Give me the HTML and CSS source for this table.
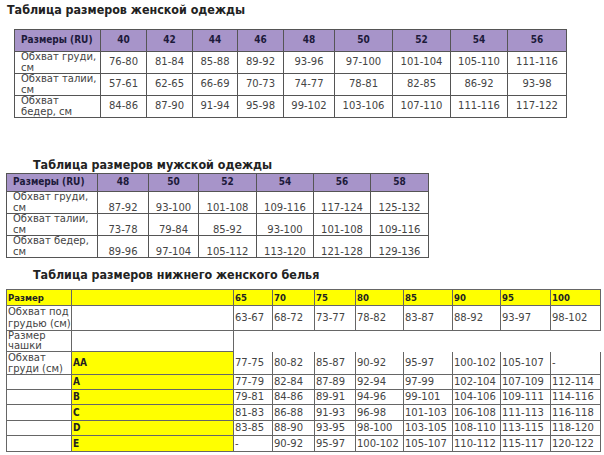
FILE: index.html
```html
<!DOCTYPE html>
<html lang="ru">
<head>
<meta charset="utf-8">
<title>Таблицы размеров</title>
<link rel="stylesheet" href="styles.css">
</head>
<body>
<h2 class="title title-1">Таблица размеров женской одежды</h2>
<table class="grid grid-w">
  <colgroup>
    <col class="w86"><col class="w46"><col class="w46"><col class="w45"><col class="w46"><col class="w51"><col class="w58"><col class="w58"><col class="w57"><col class="w59">
  </colgroup>
  <tr class="head"><th class="lab">Размеры (RU)</th><th>40</th><th>42</th><th>44</th><th>46</th><th>48</th><th>50</th><th>52</th><th>54</th><th>56</th></tr>
  <tr><td class="lab">Обхват груди,<br>см</td><td>76-80</td><td>81-84</td><td>85-88</td><td>89-92</td><td>93-96</td><td>97-100</td><td>101-104</td><td>105-110</td><td>111-116</td></tr>
  <tr><td class="lab">Обхват талии,<br>см</td><td>57-61</td><td>62-65</td><td>66-69</td><td>70-73</td><td>74-77</td><td>78-81</td><td>82-85</td><td>86-92</td><td>93-98</td></tr>
  <tr><td class="lab">Обхват<br>бедер, см</td><td>84-86</td><td>87-90</td><td>91-94</td><td>95-98</td><td>99-102</td><td>103-106</td><td>107-110</td><td>111-116</td><td>117-122</td></tr>
</table>

<h2 class="title title-2">Таблица размеров мужской одежды</h2>
<table class="grid grid-m">
  <colgroup>
    <col class="w91"><col class="w51"><col class="w50"><col class="w58"><col class="w57"><col class="w57"><col class="w58">
  </colgroup>
  <tr class="head"><th class="lab">Размеры (RU)</th><th>48</th><th>50</th><th>52</th><th>54</th><th>56</th><th>58</th></tr>
  <tr><td class="lab">Обхват груди,<br>см</td><td>87-92</td><td>93-100</td><td>101-108</td><td>109-116</td><td>117-124</td><td>125-132</td></tr>
  <tr><td class="lab">Обхват талии,<br>см</td><td>73-78</td><td>79-84</td><td>85-92</td><td>93-100</td><td>101-108</td><td>109-116</td></tr>
  <tr><td class="lab">Обхват бедер,<br>см</td><td>89-96</td><td>97-104</td><td>105-112</td><td>113-120</td><td>121-128</td><td>129-136</td></tr>
</table>

<h2 class="title title-3">Таблица размеров нижнего женского белья</h2>
<table class="bra">
  <colgroup>
    <col class="w65"><col class="w162"><col class="w39"><col class="w42"><col class="w41"><col class="w48"><col class="w49"><col class="w48"><col class="w50"><col class="w50">
  </colgroup>
  <tr class="yh r16"><th>Размер</th><th></th><th>65</th><th>70</th><th>75</th><th>80</th><th>85</th><th>90</th><th>95</th><th>100</th></tr>
  <tr class="r25"><td class="lh12">Обхват под<br>грудью (см)</td><td></td><td>63-67</td><td>68-72</td><td>73-77</td><td>78-82</td><td>83-87</td><td>88-92</td><td>93-97</td><td>98-102</td></tr>
  <tr class="r21"><td>Размер<br>чашки</td><td></td><td class="open" colspan="8"></td></tr>
  <tr class="r23"><td class="lh11">Обхват<br>груди (см)</td><td class="cup">AA</td><td class="nt">77-75</td><td class="nt">80-82</td><td class="nt">85-87</td><td class="nt">90-92</td><td class="nt">95-97</td><td class="nt">100-102</td><td class="nt">105-107</td><td class="nt">-</td></tr>
  <tr class="r15"><td></td><td class="cup">A</td><td>77-79</td><td>82-84</td><td>87-89</td><td>92-94</td><td>97-99</td><td>102-104</td><td>107-109</td><td>112-114</td></tr>
  <tr class="r15"><td></td><td class="cup">B</td><td>79-81</td><td>84-86</td><td>89-91</td><td>94-96</td><td>99-101</td><td>104-106</td><td>109-111</td><td>114-116</td></tr>
  <tr class="r16"><td></td><td class="cup">C</td><td>81-83</td><td>86-88</td><td>91-93</td><td>96-98</td><td>101-103</td><td>106-108</td><td>111-113</td><td>116-118</td></tr>
  <tr class="r15"><td></td><td class="cup">D</td><td>83-85</td><td>88-90</td><td>93-95</td><td>98-100</td><td>103-105</td><td>108-110</td><td>113-115</td><td>118-120</td></tr>
  <tr class="r16"><td></td><td class="cup">E</td><td>-</td><td>90-92</td><td>95-97</td><td>100-102</td><td>105-107</td><td>110-112</td><td>115-117</td><td>120-122</td></tr>
</table>
</body>
</html>
```

FILE: styles.css
```css
html, body {
  margin: 0;
  padding: 0;
  background: #ffffff;
}
body {
  font-family: "DejaVu Sans", Verdana, sans-serif;
  color: #333;
}

.title {
  margin: 0;
  font-family: "DejaVu Sans Condensed", "DejaVu Sans", sans-serif;
  font-stretch: condensed;
  font-size: 12.4px;
  font-weight: bold;
  line-height: 16px;
  height: 16px;
  color: #222;
  white-space: nowrap;
}
.title-1 { padding: 2px 0 0 7px; }
.title-2 { margin-top: 39px; padding-left: 33px; }
.title-3 { margin-top: 9px; padding-left: 33px; }

table {
  border-collapse: collapse;
  table-layout: fixed;
}

.grid th, .grid td {
  border: 1px solid #555;
  padding: 0;
  font-size: 10px;
  line-height: 10.5px;
  text-align: center;
  color: #444;
  white-space: nowrap;
}
.grid th {
  background: #a794c9;
  color: #1d1a3a;
  font-family: "DejaVu Sans Condensed", "DejaVu Sans", sans-serif;
  font-stretch: condensed;
  font-size: 10px;
  font-weight: bold;
}
.grid .lab {
  text-align: left;
  padding-left: 6px;
}
.grid-w { margin: 11px 0 0 14px; }
.grid-w tr { height: 22px; }
.grid-w td { vertical-align: middle; }

.grid-m { margin: 0 0 0 6px; }
.grid-m tr { height: 22px; }
.grid-m tr.head { height: 18px; }
.grid-m td { vertical-align: bottom; }

.bra { margin: 6px 0 0 6px; }
.bra th, .bra td {
  border: 1px solid #666;
  padding: 0 0 0 1px;
  font-size: 10px;
  line-height: 10px;
  text-align: left;
  vertical-align: middle;
  color: #444;
  white-space: nowrap;
}
.bra .lh12 { line-height: 12px; }
.bra .lh11 { line-height: 11px; }
.bra .yh th {
  background: #ffff00;
  color: #222;
  font-family: "DejaVu Sans Condensed", "DejaVu Sans", sans-serif;
  font-stretch: condensed;
  font-weight: bold;
  font-size: 9.5px;
}
.bra .cup {
  background: #ffff00;
  color: #222;
  font-family: "DejaVu Sans Condensed", "DejaVu Sans", sans-serif;
  font-stretch: condensed;
  font-weight: bold;
}
.bra .open {
  border-right-style: hidden;
  border-bottom-style: hidden;
}
.bra .nt { border-top-style: hidden; }

.r15 { height: 15px; }
.r16 { height: 16px; }
.r21 { height: 21px; }
.r23 { height: 23px; }
.r25 { height: 25px; }

.w39 { width: 39px; }
.w41 { width: 41px; }
.w42 { width: 42px; }
.w45 { width: 45px; }
.w46 { width: 46px; }
.w48 { width: 48px; }
.w49 { width: 49px; }
.w50 { width: 50px; }
.w51 { width: 51px; }
.w57 { width: 57px; }
.w58 { width: 58px; }
.w59 { width: 59px; }
.w65 { width: 65px; }
.w86 { width: 86px; }
.w91 { width: 91px; }
.w162 { width: 162px; }
```
